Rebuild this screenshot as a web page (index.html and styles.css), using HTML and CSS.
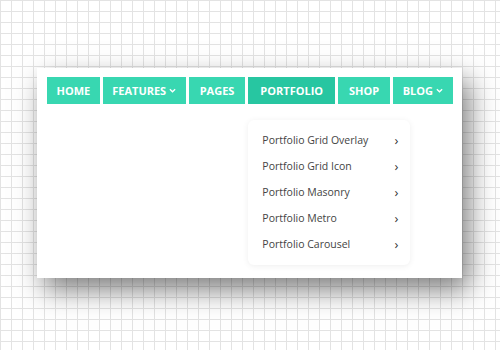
FILE: index.html
```html
<!DOCTYPE html>
<html lang="en">
<head>
<meta charset="UTF-8" />
<title>Menu</title>
<link rel="stylesheet" href="styles.css">
</head>
<body>

  <!-- White panel holding the menu bar -->
  <div class="panel">
    <ul class="menu">
      <li class="menu-item"><a href="#">HOME</a></li>
      <li class="menu-item">
        <a href="#">FEATURES
          <svg class="caret" viewBox="0 0 8 5"><path d="M1 1 L4 4 L7 1" /></svg>
        </a>
      </li>
      <li class="menu-item wide"><a href="#">PAGES</a></li>
      <li class="menu-item wide active">
        <a href="#">PORTFOLIO</a>
        <!-- Open dropdown -->
        <ul class="dropdown">
          <li><a href="#">Portfolio Grid Overlay <span class="arrow">&rsaquo;</span></a></li>
          <li><a href="#">Portfolio Grid Icon <span class="arrow">&rsaquo;</span></a></li>
          <li><a href="#">Portfolio Masonry <span class="arrow">&rsaquo;</span></a></li>
          <li><a href="#">Portfolio Metro <span class="arrow">&rsaquo;</span></a></li>
          <li><a href="#">Portfolio Carousel <span class="arrow">&rsaquo;</span></a></li>
        </ul>
      </li>
      <li class="menu-item wide"><a href="#">SHOP</a></li>
      <li class="menu-item">
        <a href="#">BLOG
          <svg class="caret" viewBox="0 0 8 5"><path d="M1 1 L4 4 L7 1" /></svg>
        </a>
      </li>
    </ul>
  </div>

</body>
</html>
```

FILE: styles.css
```css
/* Graph paper background */
body {
  margin: 0;
  width: 500px;
  height: 350px;
  overflow: hidden;
  font-family: 'Open Sans', 'Liberation Sans', sans-serif;
  background-color: #fff;
  background-image:
    linear-gradient(to right, #e3e3e3 1px, transparent 1px),
    linear-gradient(to bottom, #e3e3e3 1px, transparent 1px);
  background-size: 11px 11px;
  background-position: 0 0;
}

/* White card */
.panel {
  margin: 68px 0 0 37px;
  width: 405px;
  height: 192px;
  padding: 9px 10px;
  background: #fff;
  box-shadow: 7px 12px 26px rgba(0, 0, 0, 0.5);
}

.menu {
  list-style: none;
  margin: 0;
  padding: 0;
  display: flex;
  gap: 3px;
}

.menu-item {
  position: relative;
}

.menu-item > a {
  display: flex;
  align-items: center;
  justify-content: center;
  gap: 3px;
  height: 27px;
  padding: 0 9.5px;
  background: #38d7b1;
  color: #fff;
  font-size: 11px;
  font-weight: 700;
  text-decoration: none;
}

.menu-item.wide > a {
  padding: 0 11px;
}

.menu-item.active > a {
  background: #27c6a1;
  padding: 0 12px;
}

.caret {
  width: 7px;
  height: 5px;
  fill: none;
  stroke: #fff;
  stroke-width: 1.5;
}

/* Dropdown under PORTFOLIO */
.dropdown {
  position: absolute;
  top: 43px;
  left: 0;
  width: 162px;
  list-style: none;
  margin: 0;
  padding: 7px 0 8px;
  background: #fff;
  border-radius: 6px;
  box-shadow: 0 1px 6px rgba(0, 0, 0, 0.07);
}

.dropdown a {
  display: flex;
  align-items: center;
  justify-content: space-between;
  height: 26px;
  padding: 0 12px 0 14px;
  color: #444;
  font-size: 10.5px;
  text-decoration: none;
}

.arrow {
  font-size: 13px;
  color: #333;
}
```
